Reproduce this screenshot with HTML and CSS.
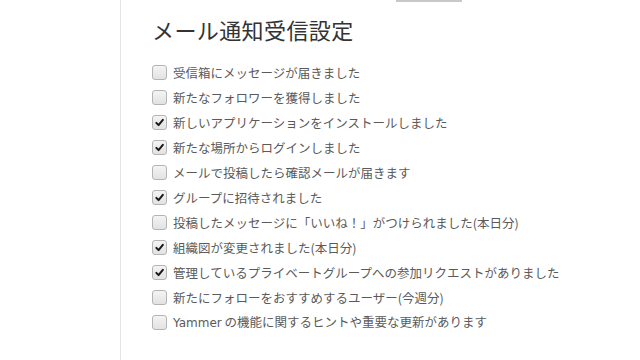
FILE: index.html
```html
<!DOCTYPE html>
<html lang="ja">
<head>
<meta charset="utf-8">
<link rel="stylesheet" href="styles.css">
</head>
<body>
<div class="page">
  <div class="panel">
    <div class="topbar"><div class="btn-edge"></div></div>
    <h1 class="title">メール通知受信設定</h1>
    <ul class="options">
      <li class="opt"><span class="box"></span><span class="label">受信箱にメッセージが届きました</span></li>
      <li class="opt"><span class="box"></span><span class="label">新たなフォロワーを獲得しました</span></li>
      <li class="opt"><span class="box checked"><svg viewBox="0 0 14 14"><path d="M3.6 7.4 L6 9.8 L10.6 4.2" /></svg></span><span class="label">新しいアプリケーションをインストールしました</span></li>
      <li class="opt"><span class="box checked"><svg viewBox="0 0 14 14"><path d="M3.6 7.4 L6 9.8 L10.6 4.2" /></svg></span><span class="label">新たな場所からログインしました</span></li>
      <li class="opt"><span class="box"></span><span class="label">メールで投稿したら確認メールが届きます</span></li>
      <li class="opt"><span class="box checked"><svg viewBox="0 0 14 14"><path d="M3.6 7.4 L6 9.8 L10.6 4.2" /></svg></span><span class="label">グループに招待されました</span></li>
      <li class="opt"><span class="box"></span><span class="label">投稿したメッセージに「いいね！」がつけられました(本日分)</span></li>
      <li class="opt"><span class="box checked"><svg viewBox="0 0 14 14"><path d="M3.6 7.4 L6 9.8 L10.6 4.2" /></svg></span><span class="label">組織図が変更されました(本日分)</span></li>
      <li class="opt"><span class="box checked"><svg viewBox="0 0 14 14"><path d="M3.6 7.4 L6 9.8 L10.6 4.2" /></svg></span><span class="label">管理しているプライベートグループへの参加リクエストがありました</span></li>
      <li class="opt"><span class="box"></span><span class="label">新たにフォローをおすすめするユーザー(今週分)</span></li>
      <li class="opt"><span class="box"></span><span class="label"><span class="latin">Yammer</span> の機能に関するヒントや重要な更新があります</span></li>
    </ul>
  </div>
</div>
</body>
</html>
```
FILE: styles.css
```css
html, body {
  margin: 0;
  padding: 0;
  background: #ffffff;
}
body {
  font-family: "Noto Sans CJK JP", "Noto Sans", sans-serif;
  width: 640px;
  height: 360px;
  overflow: hidden;
}
.page {
  padding-left: 120px;
  height: 360px;
}
.panel {
  border-left: 1px solid #e4e4e4;
  height: 360px;
  padding-left: 31px;
}
.topbar {
  height: 2px;
  padding-left: 244px;
}
.btn-edge {
  width: 66px;
  height: 2px;
  background: #c8c8c8;
}
.title {
  margin: 12px 0 0 0;
  font-size: 22px;
  line-height: 30px;
  font-weight: normal;
  color: #333333;
  letter-spacing: 0.4px;
}
.options {
  list-style: none;
  margin: 16px 0 0 0;
  padding: 0;
}
.opt {
  display: flex;
  align-items: center;
  height: 25px;
}
.box {
  width: 13px;
  height: 13px;
  border: 1px solid #b4b4b4;
  border-radius: 3px;
  background: linear-gradient(#f4f4f4, #e2e2e2);
  box-sizing: content-box;
  flex: none;
  display: flex;
  align-items: center;
  justify-content: center;
}
.box svg {
  width: 13px;
  height: 13px;
}
.box svg path {
  fill: none;
  stroke: #1a1a1a;
  stroke-width: 2.2;
  stroke-linecap: round;
  stroke-linejoin: round;
}
.label {
  margin-left: 6px;
  font-size: 12.5px;
  line-height: 25px;
  color: #5a5a5a;
  white-space: nowrap;
}
.latin {
  font-family: "DejaVu Sans", "Noto Sans", sans-serif;
  font-size: 12px;
}
```
